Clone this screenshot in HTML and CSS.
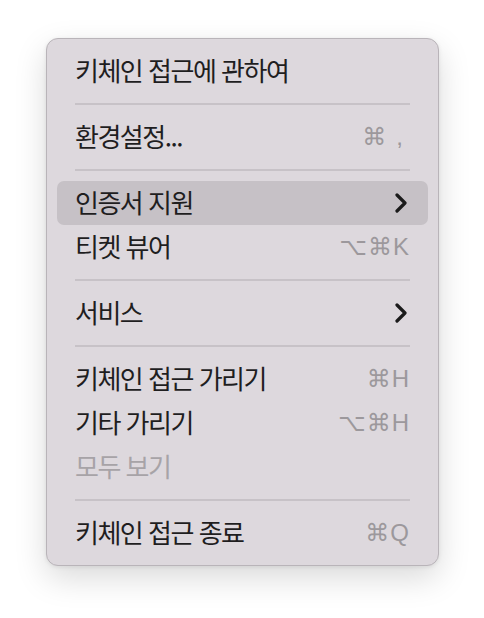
FILE: index.html
```html
<!DOCTYPE html>
<html lang="ko">
<head>
  <meta charset="UTF-8">
  <title>키체인 접근 메뉴</title>
  <link rel="stylesheet" href="styles.css">
</head>
<body>
  <div class="menu">
    <div class="item"><span class="label">키체인 접근에 관하여</span></div>
    <div class="sep"></div>
    <div class="item"><span class="label">환경설정...</span><span class="keys">⌘<span class="comma">,</span></span></div>
    <div class="sep"></div>
    <div class="item active">
      <span class="label">인증서 지원</span>
      <svg class="chev" width="12" height="20" viewBox="0 0 12 20"><path d="M2 2 L10 10 L2 18" fill="none" stroke="#1b1b1b" stroke-width="3.2" stroke-linecap="round" stroke-linejoin="round"/></svg>
    </div>
    <div class="item"><span class="label">티켓 뷰어</span><span class="keys">⌥⌘K</span></div>
    <div class="sep"></div>
    <div class="item">
      <span class="label">서비스</span>
      <svg class="chev" width="12" height="20" viewBox="0 0 12 20"><path d="M2 2 L10 10 L2 18" fill="none" stroke="#1b1b1b" stroke-width="3.2" stroke-linecap="round" stroke-linejoin="round"/></svg>
    </div>
    <div class="sep"></div>
    <div class="item"><span class="label">키체인 접근 가리기</span><span class="keys">⌘H</span></div>
    <div class="item"><span class="label">기타 가리기</span><span class="keys">⌥⌘H</span></div>
    <div class="item disabled"><span class="label">모두 보기</span></div>
    <div class="sep"></div>
    <div class="item"><span class="label">키체인 접근 종료</span><span class="keys">⌘Q</span></div>
  </div>
</body>
</html>
```

FILE: styles.css
```css
html, body {
  height: 100%;
}
body {
  margin: 0;
  background: #fff;
  font-family: "Noto Sans CJK KR", "Noto Sans", sans-serif;
}
/* 메뉴 팝업 */
.menu {
  box-sizing: border-box;
  width: 393px;
  margin: 38px 0 0 46px;
  padding: 10px;
  background: #ddd8dd;
  border: 1px solid #b9b4b9;
  border-radius: 12px;
  box-shadow: 0 12px 32px rgba(0, 0, 0, 0.15), 0 1px 4px rgba(0, 0, 0, 0.08);
}
.item {
  display: flex;
  justify-content: space-between;
  align-items: center;
  height: 44px;
  padding: 0 18px 0 18px;
  border-radius: 7px;
  color: #1f1e1f;
  font-size: 26px;
  letter-spacing: -1.5px;
}
.item .label {
  line-height: 44px;
  margin-top: -2px;
}
.item.active {
  background: #c6c1c6;
}
.item.disabled {
  color: #a7a3a7;
}
.keys {
  font-family: "Liberation Sans", "DejaVu Sans", sans-serif;
  font-size: 24px;
  letter-spacing: 1px;
  color: #9c989c;
}
.comma {
  margin: 0 6px 0 9px;
}
.chev {
  margin-right: 3px;
}
.sep {
  height: 2px;
  margin: 10px 18px;
  background: #c7c2c7;
}
```
